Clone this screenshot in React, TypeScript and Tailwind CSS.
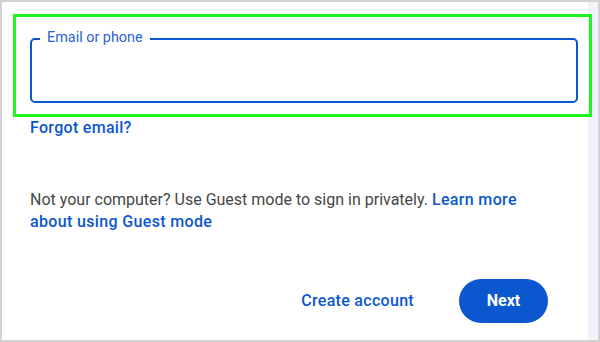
import React from "react";

export default function App() {
  const font = { fontFamily: "Roboto, 'Liberation Sans', sans-serif" };
  return (
    <div
      className="relative w-[600px] h-[342px] bg-white border-2 border-[#d2d2d2] flex overflow-hidden"
      style={font}
    >
      <div className="flex-1 min-w-0 flex flex-col pl-[28px] pt-[36px]">
        <div className="relative w-[548px] h-[65px] border-2 border-[#0b57d0] rounded-[5px]">
          <span className="absolute left-[8px] top-[-11px] bg-white px-[7px] text-[14.4px] leading-[18px] text-[#2a63d4]">
            Email or phone
          </span>
        </div>
        <a className="mt-[15px] text-[16px] leading-[20px] font-medium tracking-[0.3px] text-[#0b57d0] w-fit">
          Forgot email?
        </a>
        <p className="mt-[51px] w-[500px] text-[16px] leading-[22px] text-[#444746]">
          Not your computer? Use Guest mode to sign in privately.{" "}
          <a className="font-medium tracking-[0.35px] text-[#0b57d0]">Learn more about using Guest mode</a>
        </p>
        <div className="mt-[46px] pr-[40px] flex items-center justify-end gap-[45px]">
          <a className="text-[16px] leading-[20px] font-medium tracking-[0.3px] text-[#0b57d0]">
            Create account
          </a>
          <button className="w-[89px] h-[44px] rounded-full bg-[#0b57d0] text-white text-[16px] font-bold">
            Next
          </button>
        </div>
      </div>
      <div className="w-[10px] shrink-0 bg-gradient-to-r from-[#eef1f9] to-[#f3f5fb]" />
      <div className="absolute left-[11px] top-[12px] w-[579px] h-[103px] border-[3px] border-[#1ff51f] pointer-events-none" />
    </div>
  );
}
